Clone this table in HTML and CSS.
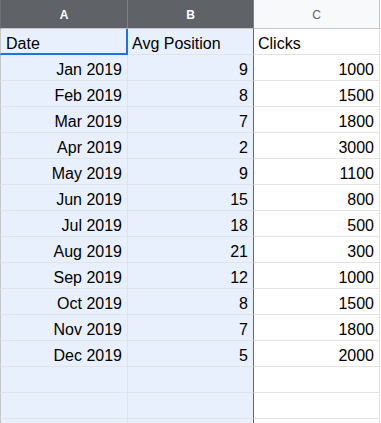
FILE: index.html
```html
<!DOCTYPE html>
<html>
<head>
<meta charset="utf-8">
<link rel="stylesheet" href="styles.css">
</head>
<body>
<div class="sheet">
  <div class="colhead sel first">A</div>
  <div class="colhead sel">B</div>
  <div class="colhead">C</div>

  <div class="cell a active left">Date</div>
  <div class="cell b left">Avg Position</div>
  <div class="cell c left">Clicks</div>

  <div class="cell a">Jan 2019</div><div class="cell b">9</div><div class="cell c">1000</div>
  <div class="cell a">Feb 2019</div><div class="cell b">8</div><div class="cell c">1500</div>
  <div class="cell a">Mar 2019</div><div class="cell b">7</div><div class="cell c">1800</div>
  <div class="cell a">Apr 2019</div><div class="cell b">2</div><div class="cell c">3000</div>
  <div class="cell a">May 2019</div><div class="cell b">9</div><div class="cell c">1100</div>
  <div class="cell a">Jun 2019</div><div class="cell b">15</div><div class="cell c">800</div>
  <div class="cell a">Jul 2019</div><div class="cell b">18</div><div class="cell c">500</div>
  <div class="cell a">Aug 2019</div><div class="cell b">21</div><div class="cell c">300</div>
  <div class="cell a">Sep 2019</div><div class="cell b">12</div><div class="cell c">1000</div>
  <div class="cell a">Oct 2019</div><div class="cell b">8</div><div class="cell c">1500</div>
  <div class="cell a">Nov 2019</div><div class="cell b">7</div><div class="cell c">1800</div>
  <div class="cell a">Dec 2019</div><div class="cell b">5</div><div class="cell c">2000</div>
  <div class="cell a"></div><div class="cell b"></div><div class="cell c"></div>
  <div class="cell a"></div><div class="cell b"></div><div class="cell c"></div>
  <div class="cell a"></div><div class="cell b"></div><div class="cell c"></div>
</div>
</body>
</html>
```

FILE: styles.css
```css
html, body {
  margin: 0;
  padding: 0;
  background: #ffffff;
  overflow: hidden;
}

.sheet {
  display: grid;
  grid-template-columns: 128px 126px 126px;
  grid-auto-rows: 26px;
  grid-template-rows: 29px;
  font-family: "Liberation Sans", Arial, sans-serif;
}

.colhead {
  box-sizing: border-box;
  display: flex;
  align-items: center;
  justify-content: center;
  padding-top: 2px;
  font-size: 12px;
  color: #5f6368;
  background: #f8f9fa;
  border-right: 1px solid #c4c7c5;
  border-bottom: 1px solid #c4c7c5;
}

.colhead.sel {
  background: #5f6368;
  color: #ffffff;
  font-weight: bold;
  border-right-color: #7d8084;
  border-bottom-color: #c4c7c5;
}

.colhead.first {
  border-left: 1px solid #6d7074;
}

.cell {
  box-sizing: border-box;
  display: flex;
  align-items: flex-end;
  justify-content: flex-end;
  padding: 0 5px 1px 4px;
  font-size: 16px;
  line-height: 18px;
  color: #000000;
  border-right: 1px solid #e2e3e3;
  border-bottom: 1px solid #e2e3e3;
  white-space: nowrap;
}

.cell.left {
  justify-content: flex-start;
}

.cell.a {
  background: #e8f0fe;
  border-left: 1px solid #c4c7c5;
  padding-left: 5px;
}

.cell.b {
  background: #e8f0fe;
  border-right: 1px solid #1a73e8;
}

.cell.active {
  border-right: 2px solid #1a73e8;
  border-bottom: 2px solid #1a73e8;
  padding-bottom: 0;
}
```
